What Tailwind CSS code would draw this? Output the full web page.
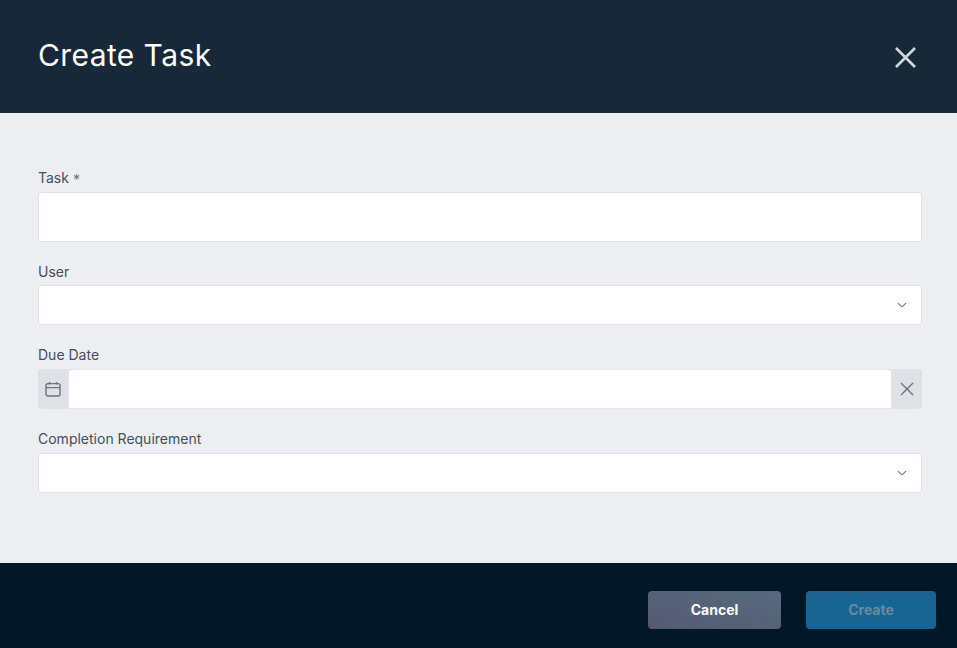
<!DOCTYPE html>
<html lang="en">
<head>
    <meta charset="UTF-8">
    <title>Create Task</title>
    <script src="https://cdn.jsdelivr.net/npm/@tailwindcss/browser@4"></script>
</head>
<body class="h-[648px] w-[957px] overflow-hidden bg-[#eceef2] font-['Inter',sans-serif]">
    <div class="flex h-[648px] flex-col">
        <!-- header -->
        <div class="flex h-[113px] shrink-0 items-center justify-between bg-[#172838] pl-[38px] pr-[40px]">
            <h1 class="pb-[2px] text-[30px] font-normal tracking-[0.4px] text-white">Create Task</h1>
            <svg class="h-[24px] w-[24px] text-[#d3d6da]" viewBox="0 0 24 24" fill="none" stroke="currentColor" stroke-width="2.6">
                <path d="M3 3 L22 22 M22 3 L3 22"/>
            </svg>
        </div>

        <!-- form -->
        <div class="flex flex-1 flex-col pl-[38px] pr-[35px] pt-[57px]">
            <label class="h-[22px] text-[14px] leading-[16px] text-[#464e5b]">Task <span class="inline-block translate-y-[2px] text-[14px] leading-none text-[#6b7280]">*</span></label>
            <input type="text" class="h-[50px] w-full rounded-[3px] border border-[#dfe1e6] bg-white">

            <label class="mt-[22px] h-[21px] text-[14px] leading-[16px] text-[#464e5b]">User</label>
            <div class="flex h-[40px] items-center justify-end rounded-[3px] border border-[#dfe1e6] bg-white pr-[14px]">
                <svg class="h-[10px] w-[10px] text-[#6b7280]" viewBox="0 0 10 10" fill="none" stroke="currentColor" stroke-width="1.1"><path d="M1 3.2 L5 6.8 L9 3.2"/></svg>
            </div>

            <label class="mt-[22px] h-[22px] text-[14px] leading-[16px] text-[#464e5b]">Due Date</label>
            <div class="flex h-[40px] rounded-[3px] bg-[#dfe1e6]">
                <div class="flex w-[31px] items-center justify-center pr-[1px]">
                    <svg class="h-[16px] w-[16px] text-[#6b7280]" viewBox="0 0 16 16" fill="none" stroke="currentColor" stroke-width="1.4">
                        <rect x="1" y="2.6" width="14" height="12.4" rx="2"/>
                        <path d="M1 6.6 H15 M4.5 1 V3.5 M11.5 1 V3.5"/>
                    </svg>
                </div>
                <div class="flex-1 rounded-[3px] border-y border-[#e6e8ec] bg-white"></div>
                <div class="flex w-[31px] items-center justify-center">
                    <svg class="h-[14px] w-[14px] text-[#6b7280]" viewBox="0 0 14 14" fill="none" stroke="currentColor" stroke-width="1.4"><path d="M1 1 L13 13 M13 1 L1 13"/></svg>
                </div>
            </div>

            <label class="mt-[22px] h-[22px] text-[14px] leading-[16px] text-[#464e5b]">Completion Requirement</label>
            <div class="flex h-[40px] items-center justify-end rounded-[3px] border border-[#dfe1e6] bg-white pr-[14px]">
                <svg class="h-[10px] w-[10px] text-[#6b7280]" viewBox="0 0 10 10" fill="none" stroke="currentColor" stroke-width="1.1"><path d="M1 3.2 L5 6.8 L9 3.2"/></svg>
            </div>
        </div>

        <!-- footer -->
        <div class="flex h-[85px] shrink-0 items-start justify-end gap-[25px] bg-[#021727] pr-[21px] pt-[28px]">
            <button class="h-[38px] w-[133px] rounded-[4px] bg-gradient-to-tr from-[#555a72] to-[#566a7c] pb-[2px] text-[14px] font-bold text-white">Cancel</button>
            <button class="h-[38px] w-[130px] rounded-[4px] bg-[#186594] pb-[2px] text-[14px] font-bold text-[#6a8a9f]">Create</button>
        </div>
    </div>
</body>
</html>
